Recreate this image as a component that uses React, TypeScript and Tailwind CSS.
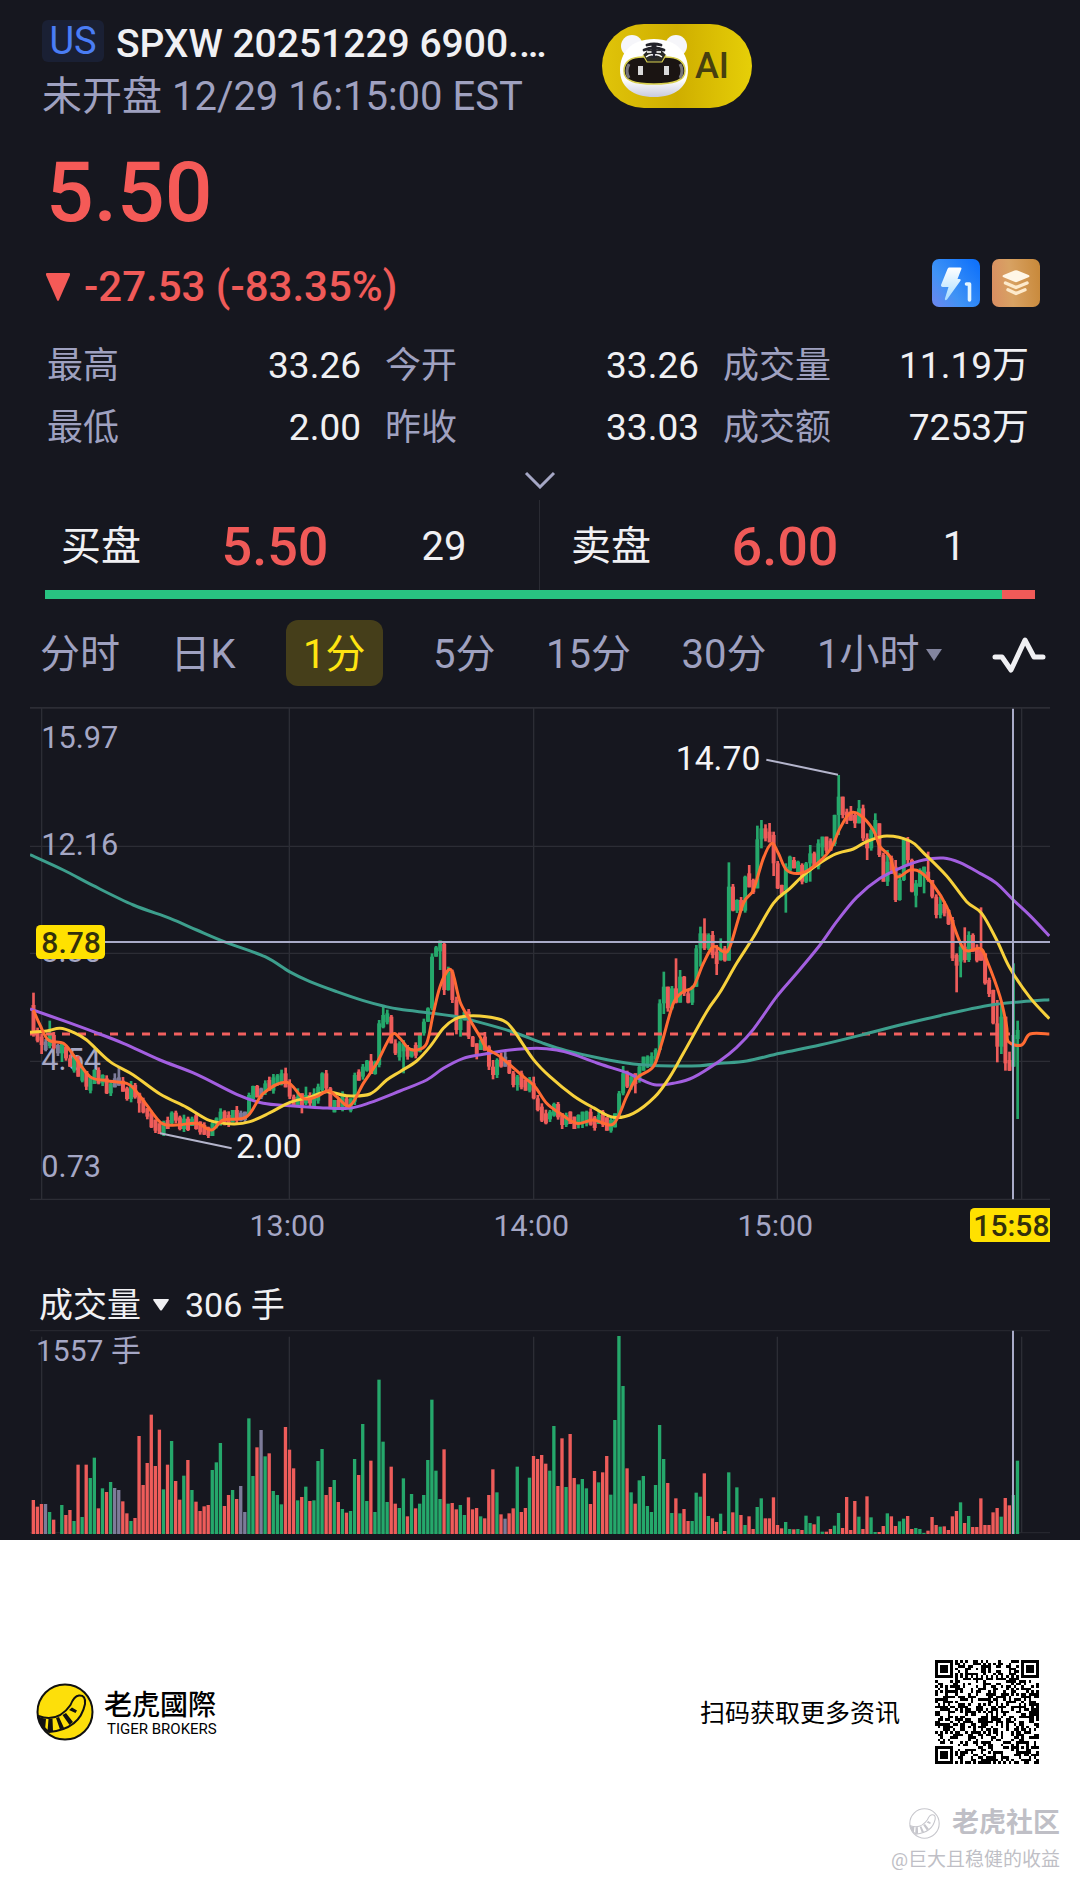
import React from "react";

type Pt = [number, number];

/* ---------- market data ---------- */

// One entry per minute: colour (r = down, g = up, n = flat) and bar height.
const VOLUME =
  "r102 r82 r90 n90 g66 r43 n0 g87 r57 r72 g39 r208 g51 r208 g168 g229 r77 g137 r126 g156 " +
  "n138 n132 r98 r62 g39 r48 r294 r147 r213 r358 r204 r313 g134 r208 g279 r159 r103 g175 r222 g132 " +
  "r97 r69 r83 r87 g192 g215 g273 r84 r117 g132 r105 n144 n66 g347 g174 r260 n312 g233 r242 g129 " +
  "g117 g89 r321 r253 r197 g101 r111 g142 r99 g101 g219 g255 r117 r141 g162 r96 g75 r64 g69 g225 " +
  "r177 g330 g99 r220 g66 g463 g277 g96 r202 r91 g78 g167 r53 g120 r77 g91 g117 g222 g403 g190 " +
  "g105 r254 g91 r93 r74 g87 g57 r110 r74 r78 g53 r47 r117 r194 g125 r59 n46 r62 r77 g202 " +
  "r66 r78 g169 r234 r225 r237 r211 g190 g324 r144 r287 g141 r300 r168 g149 g165 g137 r90 r189 g155 " +
  "r185 r234 g118 g342 g594 g444 r197 g125 r91 g161 g174 g84 g66 g147 g327 g225 r153 g63 r107 g62 " +
  "r75 r39 g39 g124 g112 r182 g54 r47 r36 g61 r9 g185 r65 g140 r57 g27 r53 r15 g81 g107 " +
  "r47 r47 r110 r27 r17 g36 g15 r14 g15 r12 g55 g33 r29 g53 g7 r7 r15 g25 g63 r18 " +
  "r111 r12 r99 g52 r15 r113 g50 g6 r6 r24 g62 r53 r24 g38 g46 r54 r15 g18 g15 g3 " +
  "r10 r51 r27 g22 r23 r12 r53 r69 g95 r33 g54 r21 r21 r107 r27 r27 r65 r78 g52 r108 " +
  "r86 g117 g220";

const bars = VOLUME.split(" ").map((s) => ({ tone: s[0], h: Number(s.slice(1)) }));

// Closing level of each minute, in drawing units (three per pixel).
const CLOSES = [
  1000, 1010, 1035, 1038, 1005, 1045, 1048, 1040, 1075, 1100, 1080, 1130, 1113, 1160, 1140, 1120, 1138, 1135, 1180, 1150,
  1145, 1142, 1175, 1185, 1165, 1180, 1210, 1225, 1250, 1270, 1280, 1290, 1275, 1270, 1238, 1262, 1275, 1266, 1278, 1256,
  1275, 1285, 1292, 1296, 1280, 1255, 1245, 1260, 1255, 1240, 1250, 1248, 1245, 1185, 1168, 1180, 1175, 1150, 1160, 1142,
  1136, 1130, 1150, 1190, 1215, 1190, 1210, 1185, 1210, 1190, 1170, 1120, 1165, 1225, 1210, 1216, 1196, 1220, 1205, 1125,
  1130, 1100, 1092, 1110, 1095, 970, 955, 950, 1030, 1060, 1040, 1042, 1070, 1045, 1055, 1000, 965, 925, 770, 742,
  732, 870, 815, 900, 990, 960, 935, 1010, 1040, 1050, 1020, 1040, 1100, 1125, 1080, 1088, 1080, 1120, 1155, 1130,
  1150, 1160, 1150, 1195, 1230, 1250, 1258, 1235, 1222, 1240, 1275, 1245, 1260, 1275, 1245, 1258, 1245, 1262, 1272, 1245,
  1262, 1280, 1270, 1250, 1180, 1120, 1160, 1130, 1140, 1100, 1080, 1085, 1078, 1050, 910, 860, 925, 865, 908, 830,
  880, 908, 860, 745, 700, 745, 705, 765, 780, 745, 782, 560, 632, 600, 632, 530, 550, 565, 418, 385,
  415, 405, 490, 565, 570, 500, 480, 505, 495, 545, 490, 460, 500, 430, 420, 440, 432, 345, 290, 345,
  350, 345, 370, 325, 415, 445, 390, 370, 465, 545, 485, 500, 600, 540, 420, 480, 575, 560, 510, 515,
  540, 590, 645, 612, 640, 660, 775, 785, 740, 780, 705, 755, 770, 760, 850, 870, 970, 1040, 950, 1090,
  1100, 1005, 1000,
];

// Extremes that reach well past the candle body: index -> [high, low].
const WICKS: Record<number, [number, number]> = {
  0: [878, 1010], 2: [1000, 1062], 4: [962, 1045], 7: [1036, 1086], 14: [1130, 1180], 15: [1108, 1145], 19: [1145, 1188],
  20: [1120, 1150], 21: [1100, 1150], 26: [1178, 1238], 31: [1270, 1300], 35: [1232, 1270], 39: [1250, 1275],
  49: [1235, 1262], 55: [1155, 1185], 58: [1130, 1172], 62: [1103, 1160], 65: [1165, 1220], 66: [1185, 1240],
  67: [1160, 1215], 69: [1165, 1215], 74: [1205, 1235], 80: [1108, 1135], 83: [1062, 1112], 86: [915, 985],
  91: [1020, 1120], 100: [724, 810], 101: [724, 885], 102: [800, 872], 104: [890, 1003], 105: [950, 1010],
  109: [1030, 1078], 111: [996, 1050], 113: [1080, 1138], 116: [1055, 1095], 119: [1125, 1172], 123: [1130, 1198],
  125: [1210, 1266], 128: [1208, 1250], 130: [1240, 1287], 133: [1250, 1286], 135: [1245, 1284], 139: [1232, 1272],
  141: [1255, 1288], 145: [1098, 1186], 148: [1125, 1180], 150: [1072, 1110], 155: [815, 942], 158: [775, 910],
  159: [810, 908], 164: [680, 800], 165: [655, 750], 168: [735, 825], 169: [715, 782], 171: [487, 782], 176: [495, 560],
  178: [377, 550], 179: [360, 445], 181: [369, 425], 182: [395, 528], 185: [490, 638], 186: [467, 520], 189: [490, 553],
  191: [435, 545], 194: [411, 470], 198: [225, 405], 199: [300, 355], 201: [318, 356], 202: [335, 384], 203: [300, 370],
  205: [400, 480], 207: [340, 412], 210: [450, 558], 212: [480, 606], 213: [520, 602], 215: [411, 495], 217: [540, 622],
  219: [500, 580], 220: [455, 545], 223: [590, 655], 227: [760, 877], 228: [730, 832], 229: [682, 788], 233: [622, 775],
  237: [900, 1087], 238: [912, 1062], 239: [980, 1112], 240: [1055, 1113], 241: [790, 1075], 242: [962, 1257],
};

const MA200: Pt[] = [
  [30, 464], [130, 510], [220, 557], [340, 615], [450, 655], [530, 690], [620, 728], [735, 770], [808, 815], [870, 845],
  [950, 875], [1030, 902], [1090, 918], [1140, 928], [1240, 940], [1310, 950], [1360, 962], [1470, 993], [1570, 1030],
  [1640, 1052], [1740, 1075], [1840, 1092], [1920, 1097], [2040, 1097], [2100, 1090], [2180, 1083], [2280, 1060],
  [2400, 1035], [2520, 1006], [2640, 975], [2760, 947], [2900, 917], [3005, 905], [3088, 899],
];

const MA60: Pt[] = [
  [30, 927], [130, 962], [220, 995], [310, 1030], [420, 1080], [530, 1123], [650, 1183], [730, 1210], [810, 1217],
  [900, 1223], [985, 1225], [1050, 1208], [1140, 1173], [1220, 1140], [1270, 1105], [1330, 1075], [1390, 1063],
  [1470, 1050], [1550, 1045], [1610, 1050], [1660, 1063], [1740, 1092], [1820, 1118], [1870, 1142], [1910, 1155],
  [1960, 1150], [2020, 1132], [2100, 1082], [2150, 1042], [2200, 988], [2270, 890], [2330, 820], [2400, 735],
  [2450, 665], [2510, 592], [2580, 535], [2650, 500], [2710, 480], [2770, 474], [2820, 488], [2880, 520], [2930, 550],
  [2980, 600], [3030, 647], [3088, 708],
];

const MA30: Pt[] = [
  [30, 997], [80, 993], [120, 985], [160, 997], [200, 1020], [270, 1085], [340, 1125], [420, 1182], [500, 1222],
  [570, 1262], [640, 1272], [690, 1265], [750, 1238], [810, 1207], [870, 1192], [920, 1175], [980, 1187], [1050, 1182],
  [1100, 1140], [1140, 1115], [1190, 1083], [1230, 1040], [1270, 985], [1305, 957], [1340, 948], [1400, 950],
  [1450, 962], [1480, 990], [1540, 1078], [1590, 1130], [1660, 1187], [1720, 1223], [1780, 1252], [1840, 1240],
  [1905, 1190], [1950, 1130], [1990, 1060], [2060, 935], [2100, 877], [2150, 790], [2200, 712], [2260, 610],
  [2310, 565], [2360, 518], [2440, 465], [2500, 447], [2540, 425], [2600, 408], [2670, 423], [2710, 458], [2780, 528],
  [2840, 605], [2885, 640], [2930, 720], [2970, 805], [3030, 893], [3088, 956],
];

const MA5: Pt[] = [
  [40, 930], [60, 975], [85, 1020], [130, 1030], [160, 1065], [210, 1130], [260, 1142], [320, 1150], [345, 1170],
  [380, 1215], [425, 1270], [470, 1275], [530, 1270], [575, 1290], [610, 1260], [680, 1250], [730, 1180], [800, 1147],
  [850, 1195], [890, 1190], [925, 1172], [950, 1190], [990, 1217], [1030, 1150], [1070, 1090], [1115, 1005],
  [1140, 1015], [1165, 1045], [1190, 1050], [1220, 1030], [1240, 940], [1260, 860], [1285, 810], [1300, 825],
  [1320, 905], [1350, 960], [1380, 1010], [1400, 1045], [1440, 1070], [1510, 1130], [1545, 1160], [1580, 1210],
  [1620, 1240], [1670, 1270], [1720, 1260], [1780, 1272], [1820, 1190], [1850, 1135], [1900, 1100], [1925, 1030],
  [1960, 910], [1990, 875], [2020, 860], [2050, 790], [2080, 740], [2110, 755], [2130, 740], [2170, 610], [2200, 570],
  [2230, 475], [2255, 430], [2275, 460], [2300, 510], [2340, 520], [2380, 500], [2430, 450], [2460, 385], [2490, 340],
  [2520, 345], [2560, 390], [2580, 440], [2610, 470], [2630, 530], [2670, 510], [2700, 515], [2740, 555], [2780, 620],
  [2830, 745], [2880, 745], [2900, 780], [2940, 890], [2960, 980], [2965, 1025], [3005, 1035], [3030, 1002],
  [3088, 1002],
];

const TONES: Record<string, string> = { r: "#ee5c5a", g: "#25a86b", n: "#7d7b99" };

// Catmull-Rom curve through the points.
function curve(p: Pt[]): string {
  let d = `M${p[0][0]} ${p[0][1]}`;
  for (let i = 0; i < p.length - 1; i++) {
    const a = p[i - 1] ?? p[i];
    const b = p[i];
    const c = p[i + 1];
    const e = p[i + 2] ?? c;
    d += `C${b[0] + (c[0] - a[0]) / 6} ${b[1] + (c[1] - a[1]) / 6} ${c[0] - (e[0] - b[0]) / 6} ${c[1] - (e[1] - b[1]) / 6} ${c[0]} ${c[1]}`;
  }
  return d;
}

/* ---------- charts ---------- */

function PriceChart() {
  return (
    <svg viewBox="30 21 3060 1611" className="block w-full" role="img" aria-label="1分 K线图">
      <g stroke="#2c2d35" strokeWidth="4">
        <path d="M30 23H3090" strokeWidth="6" />
        <path d="M30 439H3090M30 760H3090M30 1084H3090M30 1498H3090" />
        <path d="M65 23V1498M808 23V1498M1541 23V1498M2272 23V1498M3005 23V1498" />
      </g>

      <g fill="#a5a7c5" fontSize="92">
        <text x="64" y="144">15.97</text>
        <text x="64" y="465">12.16</text>
        <text x="64" y="787">8.35</text>
        <text x="64" y="1109">4.54</text>
        <text x="64" y="1432">0.73</text>
      </g>

      {CLOSES.map((c, i) => {
        const x = 40.5 + 12.2 * i;
        const open = i === 0 ? 915 : CLOSES[i - 1];
        let top = Math.min(open, c);
        let bottom = Math.max(open, c);
        if (bottom - top < 22) {
          top -= 10;
          bottom += 12;
        }
        const [hi, lo] = WICKS[i] ?? [top - ((i * 7) % 13), bottom + ((i * 5) % 11)];
        const fill = TONES[bars[i].tone];
        return (
          <g key={i} fill={fill}>
            <rect x={x - 4} y={Math.min(hi, top)} width="8" height={Math.max(lo, bottom) - Math.min(hi, top)} />
            <rect x={x - 6} y={top} width="12" height={bottom - top} />
          </g>
        );
      })}

      <path d="M30 1002H2970" stroke="#f2605f" strokeWidth="9" strokeDasharray="24 24" />
      <g fill="none" strokeWidth="9" strokeLinejoin="round">
        <path d={curve(MA200)} stroke="#3d9f8d" />
        <path d={curve(MA60)} stroke="#a35fe0" />
        <path d={curve(MA30)} stroke="#f7d13c" />
        <path d={curve(MA5)} stroke="#ff6b33" />
      </g>

      <path d="M420 1300L635 1345M2239 179L2454 224" stroke="#b4b5cc" strokeWidth="6" />
      <g fill="#f5f5f7" fontSize="101">
        <text x="648" y="1373">2.00</text>
        <text x="2221" y="210" textAnchor="end">14.70</text>
      </g>

      <path d="M250 726H3090M2979 26V1498" stroke="#a9abc8" strokeWidth="6" />
      <rect x="48" y="675" width="207" height="102" rx="14" fill="#ffe100" />
      <text x="64" y="759" fontSize="90" fontWeight="500" fill="#33300c">8.78</text>

      <g fill="#a5a7c5" fontSize="91" textAnchor="middle">
        <text x="802" y="1609">13:00</text>
        <text x="1534" y="1609">14:00</text>
        <text x="2266" y="1609">15:00</text>
      </g>
      <rect x="2850" y="1524" width="260" height="102" rx="14" fill="#ffe100" />
      <text x="2860" y="1609" fontSize="90" fontWeight="500" fill="#33300c">15:58</text>
    </svg>
  );
}

function VolumeChart() {
  return (
    <svg viewBox="0 0 3060 612" className="block w-full" role="img" aria-label="成交量图">
      <path d="M0 2H3060M0 608H3060" stroke="#25262e" strokeWidth="4" />
      <path d="M35 20V608M778 20V608M1511 20V608M2242 20V608M2975 20V608" stroke="#2c2d35" strokeWidth="4" />
      <text x="18" y="92" fontSize="90" fill="#a5a7c5">1557 手</text>
      {bars.map((b, i) => (
        <rect key={i} x={5 + 12.2 * i} y={612 - b.h} width="10" height={b.h} fill={TONES[b.tone]} />
      ))}
      <path d="M2949 2V612" stroke="#a9abc8" strokeWidth="6" />
    </svg>
  );
}

/* ---------- icons ---------- */

function TigerBot() {
  return (
    <svg viewBox="0 0 70 66" className="h-[66px] w-[70px]" aria-hidden="true">
      <defs>
        <linearGradient id="bot" x1="0" y1="0" x2="0" y2="1">
          <stop offset="0.7" stopColor="#ffffff" />
          <stop offset="1" stopColor="#c9cbdd" />
        </linearGradient>
      </defs>
      <circle cx="13" cy="13" r="11" fill="#f6f6fa" />
      <circle cx="57" cy="13" r="11" fill="#f6f6fa" />
      <path d="M35 6C58 6 69 20 69 37C69 54 56 64 35 64S1 54 1 37C1 20 12 6 35 6Z" fill="url(#bot)" />
      <path d="M5 38C5 28 13 24 24 24H46C58 24 66 28 66 38C66 48 54 51 35 51S5 48 5 38Z" fill="#1a1412" stroke="#d8cf4e" strokeWidth="1.5" />
      <path d="M10 31Q6 38 10 45M61 31Q65 38 61 45" stroke="#77757a" strokeWidth="3" fill="none" />
      <path d="M24 22L28 29H43L47 22L42 17H29Z" fill="#2b2b26" />
      <path d="M24 22L28 29H43L47 22" fill="none" stroke="#d8cf4e" strokeWidth="1.2" />
      <path d="M28 19H42" stroke="#ffffff" strokeWidth="1.6" />
      <path d="M35 11V25" stroke="#23232a" strokeWidth="5" />
      <path d="M28 12Q35 10 42 12M25 17Q35 13 45 17" stroke="#23232a" strokeWidth="2.8" strokeLinecap="round" fill="none" />
      <path d="M27 24Q31 21 34 22M43 24Q39 21 36 22" stroke="#ffffff" strokeWidth="1.4" fill="none" />
      <rect x="19" y="33" width="5" height="9" fill="#d9d9d9" />
      <rect x="45" y="33" width="5" height="9" fill="#d9d9d9" />
    </svg>
  );
}

function BoltIcon() {
  return (
    <svg viewBox="0 0 48 48" className="h-12 w-12" aria-hidden="true">
      <defs>
        <linearGradient id="blue" x1="0" y1="1" x2="1" y2="0.2">
          <stop offset="0" stopColor="#6f86ee" />
          <stop offset="0.4" stopColor="#3f93f5" />
          <stop offset="1" stopColor="#1173fb" />
        </linearGradient>
        <linearGradient id="ice" x1="0" y1="0" x2="0" y2="1">
          <stop offset="0" stopColor="#ffffff" />
          <stop offset="1" stopColor="#a6dcff" />
        </linearGradient>
      </defs>
      <rect width="48" height="48" rx="7" fill="url(#blue)" />
      <path d="M17 8.500H28.500Q30 8.500 29.400 10L25.500 20H27.500Q29.500 20.300 28.300 22L15 40.500Q13 42 12.800 40L16.500 28H10.500Q8.500 27.700 9 26L15.500 10Q16 8.600 17 8.500Z" fill="url(#ice)" />
      <path d="M34.500 25H37.500V41" fill="none" stroke="#e4f5ff" strokeWidth="3.600" strokeLinecap="round" strokeLinejoin="round" />
    </svg>
  );
}

function LayersIcon() {
  return (
    <svg viewBox="0 0 48 48" className="h-12 w-12" aria-hidden="true">
      <defs>
        <linearGradient id="bronze" x1="0" y1="0.6" x2="1" y2="0.5">
          <stop offset="0" stopColor="#d98f62" />
          <stop offset="0.4" stopColor="#d8a263" />
          <stop offset="1" stopColor="#c98a3c" />
        </linearGradient>
      </defs>
      <rect width="48" height="48" rx="7" fill="url(#bronze)" />
      <path d="M22.500 11.500Q24 10.800 25.500 11.500L36.500 16Q38.500 17.200 36.500 18.300L25.500 22.800Q24 23.500 22.500 22.800L11.500 18.300Q9.500 17.200 11.500 16Z" fill="#fff6e6" />
      <path d="M13.500 24L24 28.500L35 24M16 30.800L24 34.500L33 30.800" fill="none" stroke="#fdeacb" strokeWidth="3.400" strokeLinecap="round" strokeLinejoin="round" />
    </svg>
  );
}

function TailMark({ className, ring, disc }: { className: string; ring: string; disc: string }) {
  return (
    <svg viewBox="0 0 58 58" className={className} aria-hidden="true">
      <circle cx="29" cy="29" r="27.500" fill={disc} stroke={ring} strokeWidth="2" />
      <path d="M2.500 33Q22 40 34.500 22Q38 13 43 12.500Q50 12 49 21Q44 46 13 49Q4 43 2.500 33Z" fill={disc} stroke={ring} strokeWidth="2" strokeLinejoin="round" />
      <path d="M3 34L10 36L9 47Q4 42 3 34ZM12.500 36L16.500 35.500L17 48L11.500 48.500ZM20 35L23 34L28 45L24 46.500ZM26.500 32L30 30L37 39L33.500 42ZM33 27L36 24.500L41 27.500L39.500 30Z" fill={ring} />
    </svg>
  );
}

const QR_SIZE = 41;

function QrCode() {
  const inFinder = (x: number, y: number) =>
    (x < 8 && y < 8) || (x > QR_SIZE - 9 && y < 8) || (x < 8 && y > QR_SIZE - 9);
  const square = (x: number, y: number, cx: number, cy: number) => Math.max(Math.abs(x - cx), Math.abs(y - cy));
  let seed = 20251229;
  let d = "";
  for (let y = 0; y < QR_SIZE; y++) {
    for (let x = 0; x < QR_SIZE; x++) {
      seed = (seed * 1103515245 + 12345) % 2147483648;
      let on = (seed >> 12) % 100 < 51;
      if (inFinder(x, y)) {
        const r = Math.min(square(x, y, 3, 3), square(x, y, QR_SIZE - 4, 3), square(x, y, 3, QR_SIZE - 4));
        on = r < 2 || r === 3;
      } else if (square(x, y, 34, 34) < 3) {
        on = square(x, y, 34, 34) !== 1;
      } else if (x === 6 || y === 6) {
        on = (x + y) % 2 === 0;
      }
      if (on) d += `M${x} ${y}h1v1h-1z`;
    }
  }
  return (
    <svg viewBox="0 0 41 41" className="h-[104px] w-[104px]" role="img" aria-label="二维码" shapeRendering="crispEdges">
      <path d={d} fill="#000" />
    </svg>
  );
}

/* ---------- page ---------- */

const STATS = [
  ["最高", "33.26"],
  ["今开", "33.26"],
  ["成交量", "11.19万"],
  ["最低", "2.00"],
  ["昨收", "33.03"],
  ["成交额", "7253万"],
];

const TABS = ["分时", "日K", "1分", "5分", "15分", "30分"];

function Quote({ side, price, size }: { side: string; price: string; size: string }) {
  return (
    <div className="flex items-center pt-1 leading-[60px]">
      <span className="w-[150px] text-[40px] text-[#f0f0f3]">{side}</span>
      <span className="w-32 text-center text-[54px] font-medium text-[#f05a58]">{price}</span>
      <span className="w-[170px] pl-10 text-center text-[40px] text-[#f0f0f3]">{size}</span>
    </div>
  );
}

export default function App() {
  return (
    <div className="w-full bg-white font-['Roboto','Noto_Sans_CJK_SC',sans-serif]">
      <main className="bg-[#16171f] pb-1.5">
        <header className="flex items-start px-[42px] pt-5">
          <div className="w-[510px]">
            <div className="flex h-[42px] items-start">
              <span className="flex h-[42px] w-[62px] items-center justify-center rounded-md bg-[#1a2034] text-[38px] leading-[44px] text-[#4a7df5]">
                US
              </span>
              <h1 className="ml-3 whitespace-nowrap text-[39px] font-medium leading-[48px] text-[#f0f0f3]">
                SPXW 20251229 6900.…
              </h1>
            </div>
            <p className="mt-2 whitespace-nowrap text-[40px] leading-[54px] text-[#9fa1c0]">未开盘 12/29 16:15:00 EST</p>
          </div>
          <button
            type="button"
            className="ml-[50px] mt-1 flex h-[84px] w-[150px] items-center rounded-full bg-gradient-to-r from-[#e0c40a] via-[#cfae00] to-[#e6cf08] pl-[17px] text-[36px] font-medium text-[#47400f]"
          >
            <TigerBot />
            <span className="ml-1.5">AI</span>
          </button>
        </header>

        <p className="mt-5 px-[46px] text-[84px] font-medium leading-[98px] text-[#f55a57]">5.50</p>

        <div className="mt-5 flex h-[50px] items-center justify-between pl-[46px] pr-10">
          <p className="flex items-center gap-3.5 text-[42px] font-medium leading-[50px] text-[#f05a58]">
            <svg viewBox="0 0 24 28" className="h-7 w-6" aria-hidden="true">
              <path d="M1 0H23Q24.500 0 24 2L13 27Q12 29 11 27L0 2Q-0.500 0 1 0Z" fill="#f55a57" />
            </svg>
            -27.53 (-83.35%)
          </p>
          <div className="-mt-2 flex gap-3">
            <BoltIcon />
            <LayersIcon />
          </div>
        </div>

        <dl className="mt-[23px] grid grid-cols-3 gap-x-6 pl-[47px] pr-[43px] leading-[62px]">
          {STATS.map(([label, value]) => (
            <div key={label} className="flex justify-between [&:nth-child(3n)]:pr-2">
              <dt className="text-[36px] text-[#9fa1c0]">{label}</dt>
              <dd className="text-[37px] text-[#f0f0f3]">{value}</dd>
            </div>
          ))}
        </dl>

        <button type="button" aria-label="展开" className="flex h-[41px] w-full items-center justify-center">
          <svg viewBox="0 0 32 18" className="h-[18px] w-8" fill="none" aria-hidden="true">
            <path d="M2 2L16 16L30 2" stroke="#a5a7c5" strokeWidth="3" />
          </svg>
        </button>

        <section className="grid h-[90px] grid-cols-2">
          <div className="flex border-r border-[#2a2b33] pl-[61px]">
            <Quote side="买盘" price="5.50" size="29" />
          </div>
          <div className="flex pl-[31px]">
            <Quote side="卖盘" price="6.00" size="1" />
          </div>
        </section>
        <div className="mx-[45px] flex h-[9px]">
          <div className="flex-[967] bg-[#28c281]" />
          <div className="flex-[33] bg-[#f05a58]" />
        </div>

        <nav className="mt-[21px] flex h-[66px] items-center justify-between pl-10 pr-[34px] text-[40px] text-[#9fa1c0]">
          {TABS.map((tab) => (
            <button
              key={tab}
              type="button"
              className={
                tab === "1分"
                  ? "h-[66px] rounded-[12px] bg-[#453e1a] px-[17px] pt-1 text-[#ffe411]"
                  : "h-[66px] pt-1"
              }
            >
              {tab}
            </button>
          ))}
          <button type="button" className="flex h-[66px] items-center gap-1.5 pt-1">
            1小时
            <svg viewBox="0 0 16 12" className="h-3 w-4" aria-hidden="true">
              <path d="M0 0H16L8 12Z" fill="#83859f" />
            </svg>
          </button>
          <button type="button" aria-label="指标" className="h-[66px] pt-1">
            <svg viewBox="0 0 54 36" className="h-9 w-[54px]" fill="none" aria-hidden="true">
              <path d="M3 20H10L19 33L33 3L42 20H51" stroke="#f0f0f3" strokeWidth="5" strokeLinecap="round" strokeLinejoin="round" />
            </svg>
          </button>
        </nav>

        <section className="mx-[30px] mt-[21px]">
          <PriceChart />
        </section>

        <section className="mx-[30px] mt-9">
          <button type="button" className="flex h-[50px] items-center pl-[9px] text-[34px] leading-[50px] text-[#f0f0f3]">
            成交量
            <svg viewBox="0 0 16 12" className="ml-3 h-3 w-4" aria-hidden="true">
              <path d="M1 0H15Q16.500 0 15.500 1.500L9 11Q8 12 7 11L0.500 1.500Q-0.500 0 1 0Z" fill="#f0f0f3" />
            </svg>
            <span className="ml-4">306 手</span>
          </button>
          <VolumeChart />
        </section>
      </main>

      <footer className="bg-white pb-2 text-black">
        <div className="flex items-center justify-between pl-9 pr-[41px] pt-[120px]">
          <div className="flex items-center">
            <TailMark className="h-[58px] w-[58px]" ring="#111111" disc="#fddf0a" />
            <div className="ml-[10px]">
              <p className="font-['Noto_Sans_CJK_TC',sans-serif] text-[28px] font-medium leading-[34px]">老虎國際</p>
              <p className="ml-[3px] text-[15px] leading-[18px]">TIGER BROKERS</p>
            </div>
          </div>
          <div className="flex items-center gap-[35px]">
            <p className="pt-1 text-[25px] leading-[36px]">扫码获取更多资讯</p>
            <QrCode />
          </div>
        </div>
        <div className="mt-[38px] flex flex-col items-end pr-5 text-[#bfbfc6]">
          <p className="flex items-center gap-3 text-[27px] font-bold leading-[42px]">
            <TailMark className="h-[31px] w-[31px]" ring="#c6c6cc" disc="#ffffff" />
            老虎社区
          </p>
          <p className="text-[19px] leading-[32px]">@巨大且稳健的收益</p>
        </div>
      </footer>
    </div>
  );
}
